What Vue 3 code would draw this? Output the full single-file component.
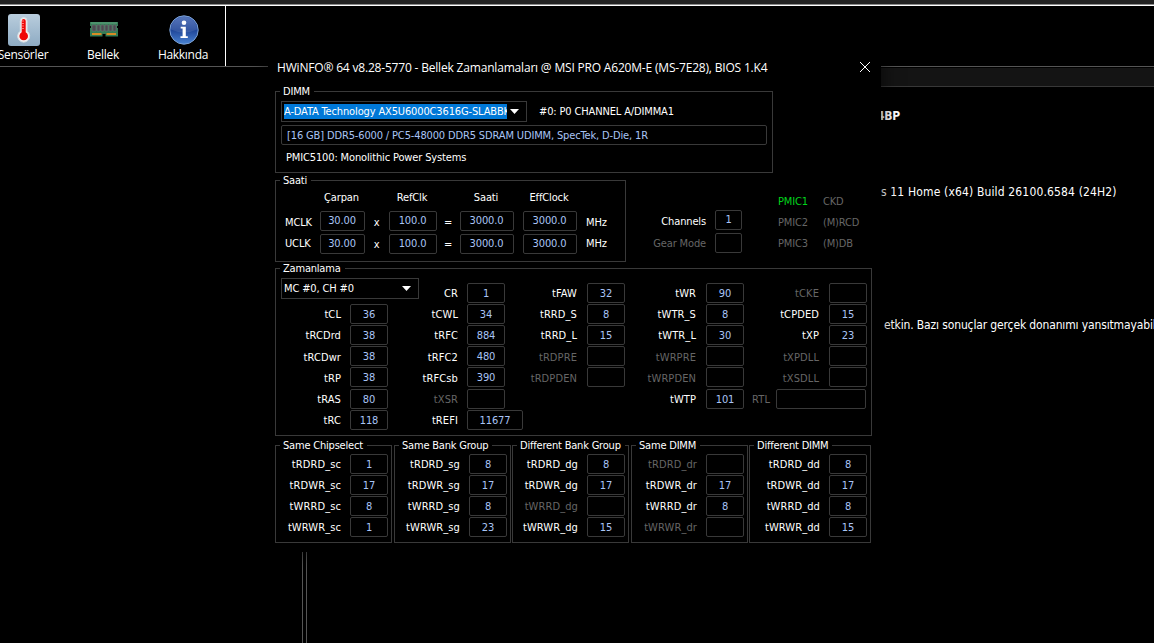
<template>
  <div class="desktop">
    <!-- main window -->
    <div class="toolbar">
      <div class="tool">
        <svg width="32" height="32" viewBox="0 0 32 32">
          <defs>
            <linearGradient id="sensorBg" x1="0" y1="0" x2="0" y2="1">
              <stop offset="0" stop-color="#b9cddd" />
              <stop offset="1" stop-color="#8eabc3" />
            </linearGradient>
          </defs>
          <rect width="32" height="32" rx="3" fill="url(#sensorBg)" />
          <path d="M12.300 7a3.400 3.400 0 0 1 6.800 0v10.200a6 6 0 1 1-6.800 0z" fill="#f4f4f4" stroke="#d9dfe3" />
          <path d="M13.700 7a2 2 0 0 1 4 0v11.200a4.300 4.300 0 1 1-4 0z" fill="#f00808" />
          <path d="M14 7h2M14 9.500h2M14 12h2M14 14.500h2" stroke="#ffb0a8" stroke-width=".7" />
        </svg>
        <span>Sensörler</span>
      </div>
      <div class="tool">
        <svg width="28" height="32" viewBox="0 0 28 32">
          <path d="M0 8h28v4h-1v2h1v8.500H15.500v-2.500h-3v2.500H0V14h1v-2H0z" fill="#347b55" />
          <path d="M1 9h26" stroke="#63a883" />
          <path d="M2 11h4v6H2zM7 11h3v6H7zM11 11h3v6h-3zM15 11h3v6h-3zM19 11h3v6h-3zM23 11h3v6h-3z" fill="#4b4b50" stroke="#77777b" stroke-width=".5" />
          <path d="M2 20h9.500M16.500 20H26" stroke="#d88b25" stroke-width="2" />
        </svg>
        <span>Bellek</span>
      </div>
      <div class="tool">
        <svg width="32" height="32" viewBox="0 0 32 32">
          <defs>
            <linearGradient id="infoBg" x1="0" y1="0" x2="0" y2="1">
              <stop offset="0" stop-color="#4668b4" />
              <stop offset=".5" stop-color="#1f4598" />
              <stop offset="1" stop-color="#4a84d2" />
            </linearGradient>
          </defs>
          <circle cx="16" cy="16" r="14.200" fill="url(#infoBg)" stroke="#7da2d4" />
          <path d="M3 15.500a13 12.500 0 0 1 26 0q-13 6-26 0z" fill="#fff" opacity=".1" />
          <circle cx="16" cy="8.700" r="2.300" fill="#fff" />
          <path d="M12.700 12.700h5.100v9.500h2v1.900h-7.300v-1.900h2.100v-7.600h-1.900z" fill="#fff" />
        </svg>
        <span>Hakkında</span>
      </div>
    </div>
    <div class="workspace">
      <div class="tree"></div>
      <div class="details">
        <div class="details-header"></div>
        <div class="detail-name">4BP</div>
        <div class="detail-os">s 11 Home (x64) Build 26100.6584 (24H2)</div>
        <div class="detail-note">etkin. Bazı sonuçlar gerçek donanımı yansıtmayabil</div>
      </div>
    </div>

    <!-- memory timings window -->
    <div class="dialog">
      <div class="titlebar">
        <span class="title">HWiNFO® 64 v8.28-5770 - Bellek Zamanlamaları @ MSI PRO A620M-E (MS-7E28), BIOS 1.K4</span>
        <svg class="close" width="12" height="12" viewBox="0 0 12 12">
          <path d="M1 1l10 10M11 1L1 11" stroke="#fff" stroke-width="1" />
        </svg>
      </div>

      <section class="group dimm">
        <h3>DIMM</h3>
        <div class="dimm-row">
          <div class="select module">
            <span class="selected">A-DATA Technology AX5U6000C3616G-SLABBK</span>
            <i class="arrow"></i>
          </div>
          <span class="slot">#0: P0 CHANNEL A/DIMMA1</span>
        </div>
        <div class="box info">[16 GB] DDR5-6000 / PC5-48000 DDR5 SDRAM UDIMM, SpecTek, D-Die, 1R</div>
        <div class="pmic-name">PMIC5100: Monolithic Power Systems</div>
      </section>

      <div class="clock-row">
        <section class="group clocks">
          <h3>Saati</h3>
          <div class="clock-grid clock-head">
            <span></span><span>Çarpan</span><span></span><span>RefClk</span><span></span><span>Saati</span><span>EffClock</span>
          </div>
          <div v-for="clock in clocks" :key="clock" class="clock-grid">
            <span class="clock-label">{{ clock }}</span>
            <span class="box">30.00</span>
            <span class="op">x</span>
            <span class="box">100.0</span>
            <span class="op">=</span>
            <span class="box">3000.0</span>
            <span class="box">3000.0</span>
            <span class="unit">MHz</span>
          </div>
        </section>
        <div class="channels">
          <div class="channel-row"><span>Channels</span><span class="box">1</span></div>
          <div class="channel-row off"><span>Gear Mode</span><span class="box"></span></div>
        </div>
        <div class="devices">
          <span class="on">PMIC1</span><span>CKD</span>
          <span>PMIC2</span><span>(M)RCD</span>
          <span>PMIC3</span><span>(M)DB</span>
        </div>
      </div>

      <section class="group timings">
        <h3>Zamanlama</h3>
        <div class="timing-columns">
          <div v-for="(column, i) in timings" :key="i" class="timing-column">
            <div v-if="i === 0" class="select channel">
              <span>MC #0, CH #0</span>
              <i class="arrow"></i>
            </div>
            <div
              v-for="[name, value] in column"
              :key="name"
              class="timing"
              :class="{ off: value === '', wide: name === 'tREFI', rtl: name === 'RTL' }"
            >
              <span class="name">{{ name }}</span>
              <span class="box">{{ value }}</span>
            </div>
          </div>
        </div>
      </section>

      <div class="turnarounds">
        <section v-for="group in turnarounds" :key="group.title" class="group turnaround">
          <h3>{{ group.title }}</h3>
          <div v-for="(value, i) in group.values" :key="i" class="timing" :class="{ off: value === '' }">
            <span class="name">{{ prefixes[i] }}_{{ group.suffix }}</span>
            <span class="box">{{ value }}</span>
          </div>
        </section>
      </div>
    </div>
  </div>
</template>

<script setup>
const clocks = ['MCLK', 'UCLK']

// an empty value means the timing is not available
const timings = [
  [['tCL', '36'], ['tRCDrd', '38'], ['tRCDwr', '38'], ['tRP', '38'], ['tRAS', '80'], ['tRC', '118']],
  [['CR', '1'], ['tCWL', '34'], ['tRFC', '884'], ['tRFC2', '480'], ['tRFCsb', '390'], ['tXSR', ''], ['tREFI', '11677']],
  [['tFAW', '32'], ['tRRD_S', '8'], ['tRRD_L', '15'], ['tRDPRE', ''], ['tRDPDEN', '']],
  [['tWR', '90'], ['tWTR_S', '8'], ['tWTR_L', '30'], ['tWRPRE', ''], ['tWRPDEN', ''], ['tWTP', '101']],
  [['tCKE', ''], ['tCPDED', '15'], ['tXP', '23'], ['tXPDLL', ''], ['tXSDLL', ''], ['RTL', '']],
]

const prefixes = ['tRDRD', 'tRDWR', 'tWRRD', 'tWRWR']
const turnarounds = [
  { title: 'Same Chipselect', suffix: 'sc', values: ['1', '17', '8', '1'] },
  { title: 'Same Bank Group', suffix: 'sg', values: ['8', '17', '8', '23'] },
  { title: 'Different Bank Group', suffix: 'dg', values: ['8', '17', '', '15'] },
  { title: 'Same DIMM', suffix: 'dr', values: ['', '17', '8', ''] },
  { title: 'Different DIMM', suffix: 'dd', values: ['8', '17', '8', '15'] },
]
</script>

<style>
body {
  margin: 0;
  background: #000;
}
</style>

<style scoped>
* {
  box-sizing: border-box;
}
.desktop {
  position: relative;
  width: 1154px;
  height: 643px;
  overflow: hidden;
  background: #000;
  color: #fff;
  font: 11px/14px 'DejaVu Sans Condensed', 'DejaVu Sans', sans-serif;
  font-stretch: condensed;
  letter-spacing: -0.14px;
  white-space: nowrap;
  display: flex;
  flex-direction: column;
}
.desktop::before {
  content: '';
  height: 6px;
  flex: none;
  background: linear-gradient(#232323 4px, #8b8b8b 4px, #8b8b8b 5px, #fff 5px);
}

/* main window */
.toolbar {
  display: flex;
  width: 226px;
  height: 60px;
  flex: none;
  border-right: 1px solid #fff;
  padding-top: 8px;
}
.tool {
  width: 80px;
  flex: none;
  display: flex;
  flex-direction: column;
  align-items: center;
  font: 12px/16px 'Open Sans', 'Noto Sans', sans-serif;
  letter-spacing: -0.3px;
}
.tool:first-child {
  margin-left: -16px;
}
.tool span {
  margin: 1px 2px 0 0;
}
.workspace {
  flex: 1;
  display: flex;
  gap: 3px;
}
.tree {
  width: 303px;
  border-top: 1px solid #555;
  border-right: 1px solid #555;
}
.details {
  flex: 1;
  border-top: 1px solid #555;
  border-left: 1px solid #555;
  padding-left: 574px;
  overflow: hidden;
}
.details-header {
  height: 20px;
  background: #141414;
  border-top: 1px solid #000;
  border-bottom: 1px solid #383838;
}
.detail-name {
  margin: 22px 0 0 -4px;
  font-size: 12px;
  font-weight: bold;
  letter-spacing: -0.2px;
}
.detail-os {
  margin-top: 62px;
  font-size: 12px;
  letter-spacing: 0.15px;
}
.detail-note {
  margin: 119px 0 0 3px;
  font-size: 12px;
}

/* dialog */
.dialog {
  position: absolute;
  left: 268px;
  top: 53px;
  width: 613px;
  height: 499px;
  padding-left: 7px;
  background: #000;
  box-shadow: 0 0 18px rgba(0, 0, 0, 0.65);
}
.titlebar {
  height: 38px;
  display: flex;
  justify-content: space-between;
  padding: 8px 10px 0 2px;
}
.title {
  font: 12px/14px 'Open Sans', 'Noto Sans', sans-serif;
  letter-spacing: -0.185px;
}
.group {
  border: 1px solid #393939;
}
.group h3 {
  width: max-content;
  height: 14px;
  margin: -8px 0 0 4px;
  padding: 0 4px 0 3px;
  background: #000;
  font: inherit;
  line-height: 16px;
  letter-spacing: -0.2px;
}
.box {
  display: block;
  height: 20px;
  border: 1px solid #393939;
  border-radius: 2px;
  color: #a9c4f5;
  line-height: 18px;
  text-align: center;
}
.select {
  display: flex;
  align-items: center;
  justify-content: space-between;
  height: 21px;
  border: 1px solid #393939;
}
.arrow {
  flex: none;
  width: 9px;
  height: 5px;
  background: #fff;
  clip-path: polygon(0 0, 100% 0, 50% 100%);
}
.off .name,
.off > span:first-child {
  color: #666;
}

.dimm {
  width: 498px;
  height: 82px;
}
.dimm-row {
  display: flex;
  align-items: center;
  margin: 3px 0 0 5px;
}
.module {
  width: 246px;
  padding: 0 7px 0 2px;
}
.selected {
  width: 223px;
  height: 15px;
  line-height: 16px;
  background: #0078d7;
  overflow: hidden;
}
.slot {
  margin-left: 12px;
}
.info {
  width: 486px;
  margin: 3px 0 0 5px;
  padding-left: 5px;
  text-align: left;
  line-height: 20px;
}
.pmic-name {
  margin: 6px 0 0 10px;
}

.clock-row {
  display: flex;
}
.dimm + .clock-row {
  margin-top: 7px;
}
.clocks {
  width: 351px;
  height: 82px;
}
.clock-grid {
  display: grid;
  grid-template-columns: 44px 45px 24px 48px 23px 54px 9px 54px 9px auto;
  height: 23px;
}
.clock-grid > :nth-child(7) {
  grid-column: 8;
}
.clock-grid > :nth-child(8) {
  grid-column: 10;
}
.clock-grid .box {
  padding-right: 1px;
}
.clock-head {
  height: 24px;
  padding-top: 4px;
  text-align: center;
}
.clock-head span {
  padding-right: 2px;
}
.clock-label {
  padding: 5px 0 0 9px;
}
.clock-grid:last-child .clock-label,
.clock-grid:last-child .unit {
  padding-top: 3px;
}
.op {
  padding: 5px 1px 0 0;
  text-align: center;
}
.clock-grid:last-child .op {
  padding-top: 4px;
}
.unit {
  padding-top: 5px;
}
.channels {
  width: 116px;
  padding-top: 30px;
}
.channel-row {
  display: flex;
  justify-content: flex-end;
  gap: 9px;
  height: 23px;
  line-height: 24px;
}
.channel-row.off {
  line-height: 21px;
}
.channel-row .box {
  width: 27px;
}
.devices {
  display: grid;
  grid-template-columns: 45px auto;
  grid-auto-rows: 21px;
  margin-left: 36px;
  padding-top: 15px;
  color: #666;
}
.devices .on {
  color: #00d41c;
}

.timings {
  width: 597px;
  height: 168px;
  margin-top: 6px;
}
.timing-columns {
  display: grid;
  grid-template-columns: 112px 117px 120px 119px 123px;
  margin-top: 1px;
}
.timing-column {
  padding-top: 7px;
}
.timing-column:first-child {
  padding-top: 2px;
}
.timing {
  display: flex;
  justify-content: flex-end;
  gap: 9px;
  height: 21px;
}
.timing .name {
  line-height: 22px;
  letter-spacing: 0.1px;
}
.timing-column:nth-child(n + 3) .timing {
  gap: 10px;
}
.timing .box {
  flex: none;
  width: 38px;
  line-height: 20px;
}
.timing-column:first-child .timing:nth-child(4) .name,
.timing-column:first-child .timing:nth-child(5) .name,
.timing-column:not(:first-child) .timing:nth-child(4) .name,
.timing-column:not(:first-child) .timing:nth-child(5) .name {
  line-height: 24px;
}
.timing-column .timing:nth-child(5) {
  height: 22px;
}
.channel {
  width: 138px;
  margin: 0 0 5px 5px;
  padding: 0 7px 0 2px;
  line-height: 16px;
}
.timing-column .timing.wide {
  margin-right: -18px;
}
.wide .box {
  width: 56px;
}
.timing-column:last-child .timing.rtl {
  gap: 6px;
  margin-right: 1px;
}
.rtl .box {
  width: 90px;
}

.turnarounds {
  display: grid;
  grid-template-columns: 119px 118px 119px 118px 122px;
  margin-top: 9px;
}
.turnaround {
  width: 117px;
  height: 98px;
  padding-right: 3px;
}
.turnaround:last-child {
  width: 122px;
}
.turnaround h3 {
  margin-bottom: 2px;
}
</style>
